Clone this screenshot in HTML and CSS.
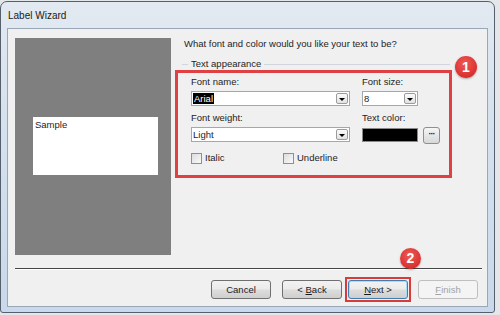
FILE: index.html
```html
<!DOCTYPE html>
<html>
<head>
<meta charset="utf-8">
<link rel="stylesheet" href="styles.css">
</head>
<body>
<div class="window">
  <div class="titlebar"><span class="title">Label Wizard</span></div>
  <div class="client">
    <div class="main">
      <div class="preview"><div class="sample">Sample</div></div>
      <div class="right">
        <div class="question">What font and color would you like your text to be?</div>
        <div class="legend"><span class="lg-lead"></span><span class="lg-text">Text appearance</span><span class="lg-line"></span></div>
        <div class="group">
          <span class="badge badge-1">1</span>
          <div class="fields">
            <div class="field">
              <div class="label">Font name:</div>
              <div class="combo"><span class="value"><span class="selected">Arial</span></span><span class="drop"></span></div>
            </div>
            <div class="field">
              <div class="label">Font size:</div>
              <div class="combo narrow"><span class="value">8</span><span class="drop"></span></div>
            </div>
            <div class="field">
              <div class="label">Font weight:</div>
              <div class="combo"><span class="value">Light</span><span class="drop"></span></div>
            </div>
            <div class="field">
              <div class="label">Text color:</div>
              <div class="color-row"><span class="swatch"></span><span class="ellipsis">···</span></div>
            </div>
          </div>
          <div class="checks">
            <div class="check italic"><span class="box"></span>Italic</div>
            <div class="check"><span class="box"></span>Underline</div>
          </div>
        </div>
      </div>
    </div>
    <div class="sep"></div>
    <div class="buttons">
      <div class="btn cancel">Cancel</div>
      <div class="btn back">&lt; <u>B</u>ack</div>
      <div class="next-wrap">
        <div class="btn next"><u>N</u>ext &gt;</div>
        <span class="callout"></span>
        <span class="badge badge-2">2</span>
      </div>
      <div class="btn finish"><u>F</u>inish</div>
    </div>
  </div>
</div>
</body>
</html>
```

FILE: styles.css
```css
html, body {
  margin: 0;
  padding: 0;
}
body {
  width: 500px;
  height: 315px;
  overflow: hidden;
  background: #e4e7ea;
  font-family: "Liberation Sans", Arial, sans-serif;
  font-size: 9.5px;
  color: #1e1e1e;
}
.window {
  box-sizing: border-box;
  width: 495px;
  height: 312px;
  margin-top: 1px;
  border: 1px solid #56606c;
  border-radius: 7px 7px 3px 3px;
  background: linear-gradient(#e2e9f1, #d5e1ee 40%, #c9d8ea);
  padding: 0 6px 5px 6px;
  display: flex;
  flex-direction: column;
}
.titlebar {
  height: 26px;
  display: flex;
  align-items: center;
  padding-left: 1px;
  flex: none;
}
.title {
  font-size: 10px;
  color: #1a1a1a;
}
.client {
  box-sizing: border-box;
  flex: 1;
  background: #f0f0f0;
  border: 1px solid #9aa7b6;
  padding: 9px 5px 0 7px;
}
.main {
  display: flex;
}
.preview {
  box-sizing: border-box;
  width: 156px;
  height: 217px;
  background: #7f7f7f;
  padding: 79px 0 0 18px;
  flex: none;
}
.sample {
  box-sizing: border-box;
  width: 125px;
  height: 58px;
  background: #ffffff;
  padding: 2px 2px;
  line-height: 11px;
}
.right {
  margin-left: 13px;
  flex: 1;
}
.question {
  height: 12px;
  line-height: 12px;
}
.legend {
  display: flex;
  align-items: center;
  height: 12px;
  line-height: 12px;
  margin-top: 8px;
  margin-left: -2px;
  width: 268px;
}
.lg-lead {
  width: 6px;
  height: 1px;
  background: #cfd6dd;
  margin-right: 3px;
}
.lg-text {
  margin-right: 3px;
}
.lg-line {
  flex: 1;
  height: 1px;
  background: #cfd6dd;
}
.group {
  position: relative;
  box-sizing: border-box;
  width: 277px;
  height: 108px;
  margin-left: -9px;
  border: 3px solid #df4044;
  padding: 3px 0 0 13px;
}
.fields {
  display: grid;
  grid-template-columns: 159px 78px;
  column-gap: 12px;
  row-gap: 6px;
}
.label {
  height: 12px;
  line-height: 12px;
  margin-bottom: 3px;
}
.combo {
  box-sizing: border-box;
  height: 15px;
  background: #ffffff;
  border: 1px solid #a4a8ad;
  display: flex;
  align-items: center;
  padding: 0 1px 0 1px;
}
.combo.narrow {
  width: 56px;
}
.value {
  flex: 1;
  line-height: 11px;
}
.selected {
  background: #000000;
  color: #ffffff;
  padding: 0 1px;
}
.drop {
  box-sizing: border-box;
  width: 12px;
  height: 11px;
  border: 1px solid #9b9b9b;
  border-radius: 2px;
  background: linear-gradient(#fbfbfb, #e2e2e2);
  position: relative;
}
.drop::after {
  content: "";
  position: absolute;
  left: 2px;
  top: 4px;
  border-left: 3px solid transparent;
  border-right: 3px solid transparent;
  border-top: 3px solid #000000;
}
.color-row {
  display: flex;
  align-items: flex-start;
}
.swatch {
  box-sizing: border-box;
  width: 56px;
  height: 14px;
  margin-top: 1px;
  background: #000000;
  border: 1px solid #8a8a8a;
}
.ellipsis {
  box-sizing: border-box;
  width: 17px;
  height: 17px;
  margin-left: 5px;
  border: 1px solid #8e8f8f;
  border-radius: 3px;
  background: linear-gradient(#f6f6f6, #e6e6e6 50%, #d8d8d8);
  font-size: 9px;
  font-weight: bold;
  line-height: 12px;
  text-align: center;
  letter-spacing: -1px;
  color: #222;
}
.checks {
  display: flex;
  margin-top: 8px;
  height: 12px;
  line-height: 12px;
}
.check {
  display: flex;
  align-items: center;
}
.check.italic {
  width: 92px;
}
.box {
  box-sizing: border-box;
  width: 11px;
  height: 11px;
  border: 1px solid #8f8f8f;
  background: linear-gradient(135deg, #dcdcdc, #fafafa);
  margin-right: 3px;
}
.badge {
  position: absolute;
  border-radius: 50%;
  background: radial-gradient(circle at 45% 35%, #f05a55, #d8302f 70%);
  color: #ffffff;
  font-weight: bold;
  text-align: center;
  box-shadow: 0 1px 2px rgba(0,0,0,0.3);
}
.badge-1 {
  left: 277px;
  top: -17px;
  width: 22px;
  height: 22px;
  line-height: 22px;
  font-size: 14px;
}
.badge-2 {
  left: 52px;
  top: -32px;
  width: 21px;
  height: 21px;
  line-height: 21px;
  font-size: 14px;
}
.sep {
  margin-top: 13px;
  height: 1px;
  background: #454545;
  border-bottom: 1px solid #ffffff;
}
.buttons {
  display: flex;
  justify-content: flex-end;
  margin-top: 10px;
  padding-right: 4px;
}
.btn {
  box-sizing: border-box;
  width: 60px;
  height: 19px;
  border: 1px solid #707070;
  border-radius: 3px;
  background: linear-gradient(#f2f2f2, #ebebeb 49%, #dddddd 51%, #cfcfcf);
  text-align: center;
  line-height: 17px;
  color: #1a1a1a;
}
.cancel {
  margin-right: 11px;
}
.back {
  margin-right: 6px;
}
.next-wrap {
  position: relative;
  margin-right: 10px;
}
.next {
  border-color: #3c7fb1;
  box-shadow: inset 0 0 0 1px #a8dcf5;
}
.callout {
  position: absolute;
  left: -3px;
  top: -3px;
  right: -3px;
  bottom: -3px;
  border: 2px solid #d93a3a;
}
.finish {
  border-color: #bfbfbf;
  background: #f4f4f4;
  color: #a3a3a3;
}
```
